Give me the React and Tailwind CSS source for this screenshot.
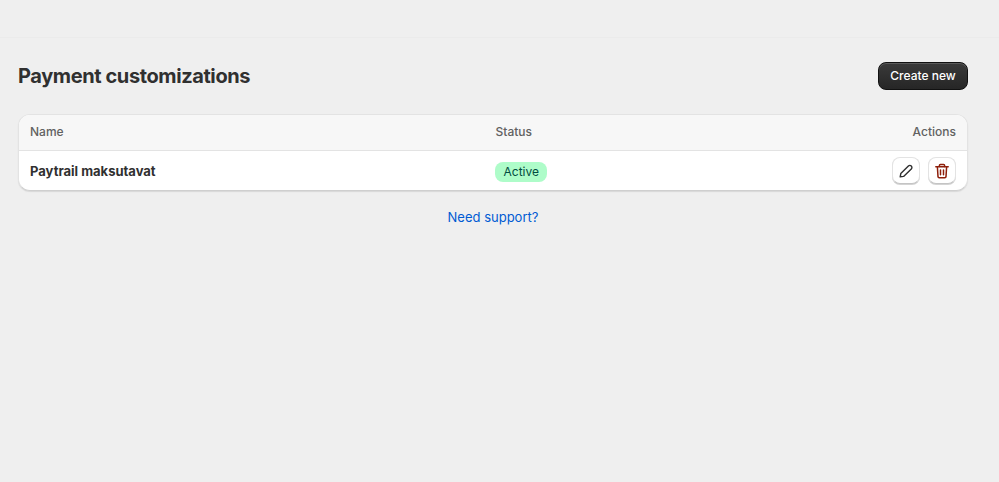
function IconButton({ children }) {
  return (
    <button className="flex h-[27px] w-7 items-center justify-center rounded-lg border border-[#e3e3e3] border-b-[#c4c4c4] bg-white shadow-[0_1px_0_#d4d4d4]">
      {children}
    </button>
  );
}

function EditIcon() {
  return (
    <svg width="16" height="16" viewBox="0 0 16 16" fill="none" stroke="#303030" strokeWidth="1.4" strokeLinejoin="round">
      <path d="M2.2 13.8 L2.8 10.6 L10.4 3 a2.05 2.05 0 0 1 2.9 2.9 L5.6 13.4 Z" />
    </svg>
  );
}

function DeleteIcon() {
  return (
    <svg width="16" height="16" viewBox="0 0 16 16" fill="none" stroke="#8e1f0b" strokeWidth="1.5" strokeLinecap="round" strokeLinejoin="round">
      <path d="M1.8 3.8 H14.2" />
      <path d="M5.4 3.5 V2.4 a1 1 0 0 1 1 -1 H9.6 a1 1 0 0 1 1 1 V3.5" />
      <path d="M3.4 4 L4 13.6 a1.2 1.2 0 0 0 1.2 1.1 H10.8 a1.2 1.2 0 0 0 1.2 -1.1 L12.6 4" />
      <path d="M6.5 7 V11.8 M9.5 7 V11.8" />
    </svg>
  );
}

export default function App() {
  return (
    <div className="min-h-[482px] bg-[#efefef] font-['Inter',sans-serif] text-xs leading-4 text-[#303030]">
      {/* Top bar */}
      <div className="h-[38px] border-b border-[#ebebeb]" />

      <div className="flex flex-col pl-[18px] pr-[31px]">
        {/* Header */}
        <div className="mt-6 flex h-7 items-center justify-between">
          <h1 className="text-xl font-bold tracking-[-0.4px] text-[#303030]">Payment customizations</h1>
          <button className="h-7 w-[90px] rounded-lg border border-[#111] bg-gradient-to-b from-[#3a3a3a] to-[#262626] text-xs font-medium text-white shadow-[inset_0_1px_0_#5a5a5a]">
            Create new
          </button>
        </div>

        {/* Table */}
        <div className="mt-6 overflow-hidden rounded-xl border border-[#e3e3e3] border-b-[#cfcfcf] bg-white shadow-[0_1px_1px_#d8d8d8]">
          <div className="flex h-9 items-center border-b border-[#e3e3e3] bg-[#f7f7f7] px-[11px] pb-px font-medium text-[#616161]">
            <div className="w-[465.5px]">Name</div>
            <div className="flex-1">Status</div>
            <div>Actions</div>
          </div>
          <div className="flex h-[39px] items-center px-[11px]">
            <div className="w-[465px] text-[13px] font-bold text-[#303030]">Paytrail maksutavat</div>
            <div className="flex-1 pt-0.5">
              <span className="block w-fit rounded-lg bg-[#aefcc9] px-[8.5px] py-0.5 text-[#014b40]">Active</span>
            </div>
            <div className="flex gap-2">
              <IconButton>
                <EditIcon />
              </IconButton>
              <IconButton>
                <DeleteIcon />
              </IconButton>
            </div>
          </div>
        </div>

        {/* Footer link */}
        <div className="mt-4 text-center text-[13px] leading-5">
          <a className="text-[#005bd3]">Need support?</a>
        </div>
      </div>
    </div>
  );
}
